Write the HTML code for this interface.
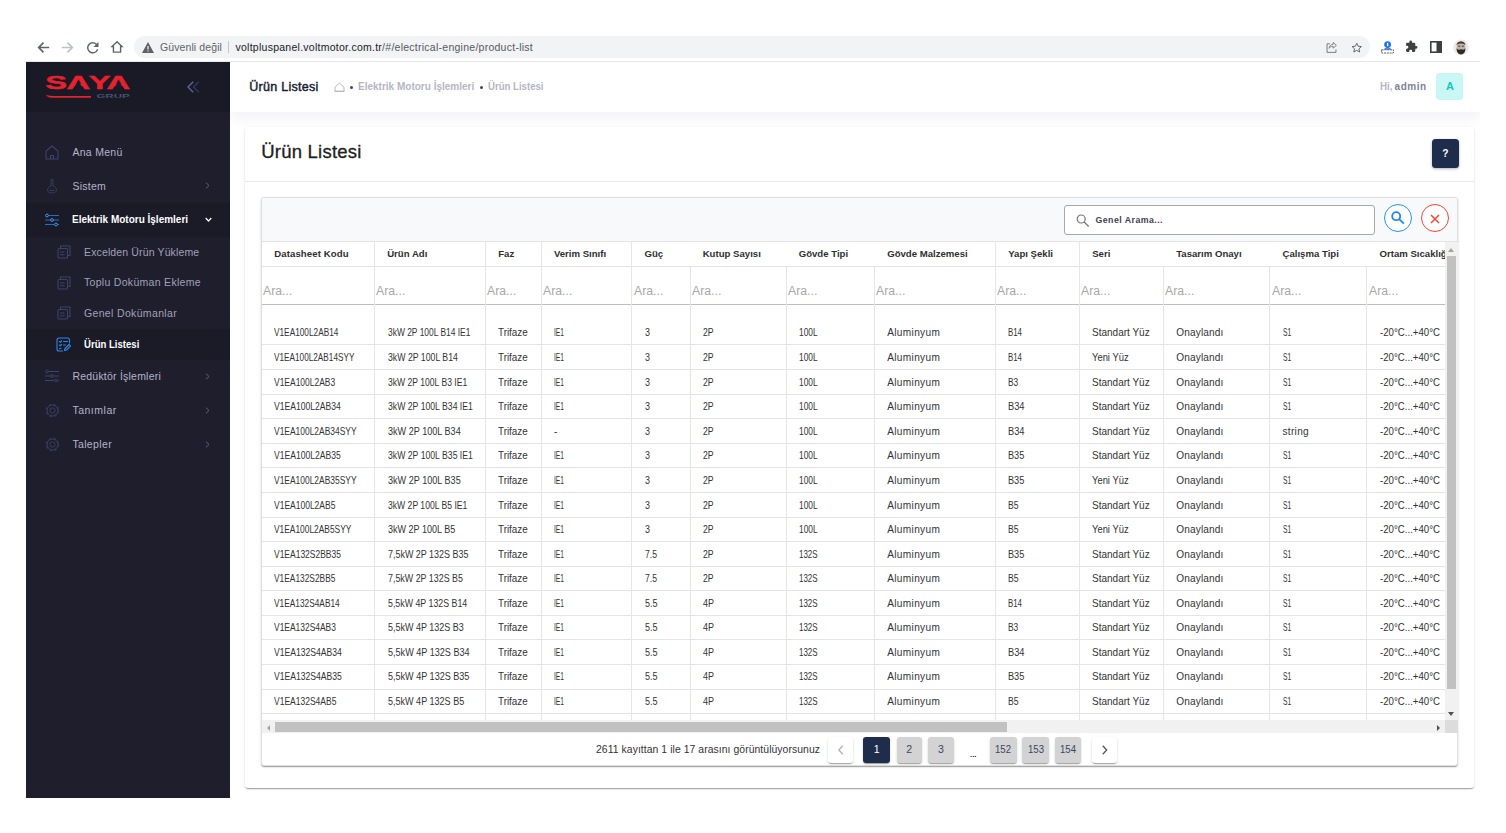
<!DOCTYPE html>
<html lang="tr"><head><meta charset="utf-8"><title>Ürün Listesi</title>
<style>
html,body{margin:0;padding:0;background:#fff;}
body{width:1506px;height:833px;overflow:hidden;position:relative;font-family:"Liberation Sans",sans-serif;}
.t{position:absolute;white-space:pre;}
.abs{position:absolute;}
svg{position:absolute;overflow:visible;}
#aside{position:absolute;left:26px;top:62px;width:204px;height:736px;background:#1e1e2d;}
#brand{position:absolute;left:0;top:0;width:204px;height:50px;background:#1a1a27;}
.mact{position:absolute;left:0;width:204px;background:#1b1b28;}
#hdrw{position:absolute;left:230px;top:62px;width:1250px;height:80px;overflow:hidden;}#hdr{position:absolute;left:0;top:0;width:1250px;height:49.700px;background:#fff;box-shadow:0 6px 12px rgba(82,63,105,.07);}
#card{position:absolute;left:245px;top:126.800px;width:1229px;height:661px;background:#fff;border-radius:3px;box-shadow:0 2px 1px -1px rgba(0,0,0,.2),0 1px 1px 0 rgba(0,0,0,.14),0 1px 3px 0 rgba(0,0,0,.12);}
#tbl{position:absolute;left:261.3px;top:197px;width:1197px;height:568.800px;background:#fff;border:1px solid #dedede;box-sizing:border-box;border-radius:3px;box-shadow:0 2px 1px -1px rgba(0,0,0,.2),0 1px 1px 0 rgba(0,0,0,.14),0 1px 3px 0 rgba(0,0,0,.12);overflow:hidden;}
.hl{position:absolute;height:1px;background:#e3e3e3;}
.vl{position:absolute;width:1px;background:#e6e6e6;}
</style></head><body>
<div class="abs" style="left:26px;top:61px;width:1454px;height:1px;background:#e4e6e8;"></div>
<div class="abs" style="left:134px;top:36px;width:1236px;height:22px;border-radius:11px;background:#f1f3f4;"></div>
<svg style="left:37px;top:41px" width="13" height="13" viewBox="0 0 16 16"><path d="M15 7H4.4l4.3-4.3L7.3 1.300 .6 8l6.700 6.700 1.400-1.400L4.400 9H15z" fill="#5f6368"/></svg>
<svg style="left:61px;top:41px" width="13" height="13" viewBox="0 0 16 16"><path d="M1 7h10.600L7.300 2.700l1.400-1.400L15.400 8l-6.700 6.700-1.400-1.400L11.600 9H1z" fill="#bdc1c6"/></svg>
<svg style="left:87px;top:41.500px" width="11.500" height="11.500" viewBox="0 0 16 16"><path d="M13.650 2.350A7.958 7.958 0 0 0 8 0a8 8 0 1 0 7.730 10h-2.080A5.990 5.990 0 0 1 8 14 6 6 0 1 1 8 2c1.660 0 3.140.690 4.220 1.780L9 7h7V0l-2.350 2.350z" fill="#5f6368"/></svg>
<svg style="left:110px;top:40px" width="14" height="14" viewBox="0 0 16 16"><path d="M8 2L2.300 7.400H3.900V13.900H12.100V7.400H13.700z" fill="none" stroke="#5f6368" stroke-width="1.600" stroke-linejoin="miter"/></svg>
<svg style="left:141.500px;top:41.500px" width="12" height="11" viewBox="0 0 12 11"><path d="M6 0L0 11h12L6 0zm-.6 4h1.200v3.500H5.400V4zm0 4.400h1.200v1.200H5.400V8.400z" fill="#5f6368"/></svg>
<div class="t" style="left:160.00px;top:39.80px;font-size:10.5px;line-height:15px;font-weight:400;color:#5f6368;letter-spacing:0.100px;">Güvenli değil</div>
<div class="abs" style="left:228px;top:41px;width:1px;height:12px;background:#c4c7c9;"></div>
<div class="t" style="left:235.5px;top:39.800px;font-size:10.500px;line-height:15px;letter-spacing:0.257px;color:#202124;">voltpluspanel.voltmotor.com.tr<span style="color:#55595e">/#/electrical-engine/product-list</span></div>
<svg style="left:1325px;top:40.500px" width="13" height="13" viewBox="0 0 16 16" fill="none" stroke="#74797e" stroke-width="1.200"><path d="M6 3.500H2.500v10.500h11V10.500"/><path d="M10 1.800l4 3.500-4 3.500V6.500c-2.500 0-4 .8-5 2.500.3-2.800 2-4.800 5-5z" stroke-width="1.100"/></svg>
<svg style="left:1350.800px;top:41.500px" width="11.500" height="11.500" viewBox="0 0 24 24"><path d="M12 2.500l2.900 6.300 6.900.7-5.200 4.600 1.500 6.800L12 17.400l-6.100 3.500 1.500-6.800L2.200 9.500l6.900-.7L12 2.500z" fill="none" stroke="#5f6368" stroke-width="2" stroke-linejoin="round"/></svg>
<svg style="left:1380.700px;top:40.500px" width="13" height="12.500" viewBox="0 0 13 12.500"><circle cx="6.600" cy="3.600" r="3.400" fill="#1a73e8"/><rect x="5.900" y="1.800" width="1.400" height="3.400" fill="#fff"/><path d="M3.500 7.200h6.200v1.500H3.500z" fill="#1a73e8"/><rect x="0.600" y="8.800" width="11.800" height="3.200" fill="none" stroke="#5f6368" stroke-width="1" stroke-dasharray="2 .8"/></svg>
<svg style="left:1404.500px;top:40px" width="13" height="13" viewBox="0 0 24 24"><path d="M20.500 11H19V7a2 2 0 0 0-2-2h-4V3.500a2.500 2.500 0 0 0-5 0V5H4a2 2 0 0 0-2 2v3.800h1.500a2.700 2.700 0 0 1 0 5.400H2V20a2 2 0 0 0 2 2h3.800v-1.500a2.700 2.700 0 0 1 5.400 0V22H17a2 2 0 0 0 2-2v-4h1.500a2.500 2.500 0 0 0 0-5z" fill="#3c4043"/></svg>
<svg style="left:1430px;top:41px" width="12" height="12" viewBox="0 0 12 12"><rect x="0.800" y="0.800" width="10.400" height="10.400" fill="none" stroke="#3c4043" stroke-width="1.600"/><rect x="6.500" y="1" width="4.500" height="10" fill="#3c4043"/></svg>
<svg style="left:1453px;top:39px" width="16" height="16.500" viewBox="0 0 16 16.500"><circle cx="8" cy="8.200" r="7.800" fill="#eceae8"/><ellipse cx="8" cy="7.800" rx="4.300" ry="5.600" fill="#bfb3a8"/><path d="M3.600 6.500c-.3-5.500 9.100-5.500 8.800 0-.8-2.600-8-2.600-8.800 0z" fill="#3a3632"/><path d="M3.700 8.500c.2 1.500 1 2 2 2.300 1.400-.9 3.200-.9 4.600 0 1-.3 1.800-.8 2-2.300.5 4-1.300 7-4.300 7s-4.800-3-4.300-7z" fill="#2e2b29"/><path d="M5.200 7.200h2M8.800 7.200h2" stroke="#2e2b29" stroke-width=".9"/></svg>
<div id="aside"><div id="brand"></div>
<div class="mact" style="top:141px;height:34px;"></div>
<div class="mact" style="top:267px;height:31px;"></div>
</div>
<svg style="left:44.800px;top:71.600px" width="90" height="28" viewBox="0 0 90 28">
<g transform="translate(0.3,17.3) scale(1.72,1)"><text x="0 12.400 25.200 35.600" y="0" font-family="Liberation Sans, sans-serif" font-weight="700" font-size="19" fill="#e5222d" stroke="#e5222d" stroke-width=".4">SAYA</text></g>
<path d="M33.200 9.100L39.100 18H27.300zM73.700 9.100L79.600 18H67.800z" fill="#1a1a27"/>
<path d="M0.800 22.500c1.400 2.300 3 3.200 5.600 3.200H46v-1.800H7.400c-2.600 0-4.800-.4-6.600-1.400z" fill="#e5222d"/>
<text x="51.400" y="26.400" font-family="Liberation Sans, sans-serif" font-weight="700" font-size="5.800" textLength="33.400" lengthAdjust="spacingAndGlyphs" fill="#465069">GRUP</text>
</svg>
<svg style="left:187px;top:81px" width="13" height="12" viewBox="0 0 13 12" fill="none" stroke-width="1.400"><path d="M6.200 .8L1 6l5.200 5.200" stroke="#5d6199"/><path d="M11.800 .8L6.600 6l5.200 5.200" stroke="#34365a"/></svg>
<svg style="left:45px;top:144.5px" width="14" height="15" viewBox="0 0 14 15" fill="none" stroke="#40426b" stroke-width="1.100" stroke-linejoin="round"><path d="M1 6.200L7 1l6 5.200V14H1z"/><path d="M5.500 14v-3.500h3V14"/></svg>
<div class="t" style="left:72.40px;top:144.50px;font-size:10.5px;line-height:15px;font-weight:400;color:#b4b5c9;letter-spacing:0.291px;">Ana Menü</div>
<svg style="left:45px;top:177.5px" width="14" height="16" viewBox="0 0 14 16" fill="none" stroke="#383a5e" stroke-width="1"><path d="M6 1.500h2v6.500c2.200.8 3.500 2.300 3.500 4 0 1.800-2 3-4.500 3s-4.500-1.200-4.500-3c0-1.700 1.300-3.200 3.500-4z"/><path d="M4.500 12.500h5"/></svg>
<div class="t" style="left:72.40px;top:178.60px;font-size:10.5px;line-height:15px;font-weight:400;color:#b4b5c9;letter-spacing:0.251px;">Sistem</div>
<svg style="left:204.8px;top:182.0px" width="5" height="7" viewBox="0 0 5 7" fill="none" stroke="#5c5e81" stroke-width="1"><path d="M1 .7l3 2.800-3 2.800"/></svg>
<svg style="left:45px;top:212.5px" width="14" height="14" viewBox="0 0 14 14" fill="none" stroke="#3699ff" stroke-width="1"><path d="M3.500 2.500H14M0 7h5.500M8.500 7H14M0 11.500h9.500M12.500 11.500H14" stroke="#2a6cbd"/><circle cx="2" cy="2.500" r="1.400"/><circle cx="7" cy="7" r="1.400"/><circle cx="11" cy="11.500" r="1.400"/></svg>
<div class="t" style="left:72.40px;top:213.40px;font-size:10px;line-height:14px;font-weight:700;color:#fff;transform:scaleX(0.9995);transform-origin:0 50%;">Elektrik Motoru İşlemleri</div>
<svg style="left:205.0px;top:217.2px" width="7" height="5" viewBox="0 0 7 5" fill="none" stroke="#fff" stroke-width="1.200"><path d="M.7 1l2.800 3 2.800-3"/></svg>
<svg style="left:56.5px;top:245px" width="14" height="14" viewBox="0 0 14 14" fill="none" stroke="#3f4169" stroke-width="1.100" stroke-linejoin="round"><path d="M3.500 3.500V1H13v9.500h-2.500"/><rect x="1" y="3.500" width="9.500" height="9.500" rx="1"/><path d="M3 7h4.500M3 9.800h4.500"/></svg>
<div class="t" style="left:84.00px;top:244.50px;font-size:10.5px;line-height:15px;font-weight:400;color:#a1a2b8;letter-spacing:0.136px;">Excelden Ürün Yükleme</div>
<svg style="left:56.5px;top:275.6px" width="14" height="14" viewBox="0 0 14 14" fill="none" stroke="#3f4169" stroke-width="1.100" stroke-linejoin="round"><path d="M3.500 3.500V1H13v9.500h-2.500"/><rect x="1" y="3.500" width="9.500" height="9.500" rx="1"/><path d="M3 7h4.500M3 9.800h4.500"/></svg>
<div class="t" style="left:84.00px;top:275.10px;font-size:10.5px;line-height:15px;font-weight:400;color:#a1a2b8;letter-spacing:0.300px;">Toplu Doküman Ekleme</div>
<svg style="left:56.5px;top:306.4px" width="14" height="14" viewBox="0 0 14 14" fill="none" stroke="#3f4169" stroke-width="1.100" stroke-linejoin="round"><path d="M3.500 3.500V1H13v9.500h-2.500"/><rect x="1" y="3.500" width="9.500" height="9.500" rx="1"/><path d="M3 7h4.500M3 9.800h4.500"/></svg>
<div class="t" style="left:84.00px;top:305.90px;font-size:10.5px;line-height:15px;font-weight:400;color:#a1a2b8;letter-spacing:0.341px;">Genel Dokümanlar</div>
<svg style="left:56px;top:336.5px" width="15" height="15" viewBox="0 0 15 15" fill="none" stroke="#2f86e6" stroke-width="1.100" stroke-linejoin="round" stroke-linecap="round"><path d="M13.500 6V3a2 2 0 0 0-2-2H3a2 2 0 0 0-2 2v9a2 2 0 0 0 2 2h3.500"/><path d="M3.500 4.500l.8.800 1.200-1.500M3.500 8l.8.800 1.200-1.500M3.500 11.500h1.500M7.500 4.500h4M7.500 8h2"/><path d="M8.500 13.500l.5-2 4-4 1.500 1.500-4 4z"/></svg>
<div class="t" style="left:84.00px;top:336.50px;font-size:10.5px;line-height:15px;font-weight:700;color:#fff;transform:scaleX(0.9112);transform-origin:0 50%;">Ürün Listesi</div>
<svg style="left:45px;top:369.4px" width="14" height="14" viewBox="0 0 14 14" fill="none" stroke="#3f4168" stroke-width="1"><path d="M3.500 2.500H14M0 7h5.500M8.500 7H14M0 11.500h9.500M12.500 11.500H14" stroke="#3f4168"/><circle cx="2" cy="2.500" r="1.400"/><circle cx="7" cy="7" r="1.400"/><circle cx="11" cy="11.500" r="1.400"/></svg>
<div class="t" style="left:72.40px;top:368.90px;font-size:10.5px;line-height:15px;font-weight:400;color:#b4b5c9;letter-spacing:0.221px;">Redüktör İşlemleri</div>
<svg style="left:204.8px;top:372.9px" width="5" height="7" viewBox="0 0 5 7" fill="none" stroke="#5c5e81" stroke-width="1"><path d="M1 .7l3 2.800-3 2.800"/></svg>
<svg style="left:44.5px;top:402.5px" width="15" height="15" viewBox="0 0 15 15" fill="none" stroke="#3c3e64" stroke-width="1"><circle cx="7.500" cy="7.500" r="5.900" stroke-dasharray="2.600 2.030" stroke-width="2.200" opacity=".55"/><circle cx="7.500" cy="7.500" r="5.500"/><circle cx="7.500" cy="7.500" r="2.600"/></svg>
<div class="t" style="left:72.40px;top:402.50px;font-size:10.5px;line-height:15px;font-weight:400;color:#b4b5c9;letter-spacing:0.517px;">Tanımlar</div>
<svg style="left:204.8px;top:406.5px" width="5" height="7" viewBox="0 0 5 7" fill="none" stroke="#5c5e81" stroke-width="1"><path d="M1 .7l3 2.800-3 2.800"/></svg>
<svg style="left:44.5px;top:436.7px" width="15" height="15" viewBox="0 0 15 15" fill="none" stroke="#3c3e64" stroke-width="1"><circle cx="7.500" cy="7.500" r="5.900" stroke-dasharray="2.600 2.030" stroke-width="2.200" opacity=".55"/><circle cx="7.500" cy="7.500" r="5.500"/><circle cx="7.500" cy="7.500" r="2.600"/></svg>
<div class="t" style="left:72.40px;top:436.70px;font-size:10.5px;line-height:15px;font-weight:400;color:#b4b5c9;letter-spacing:0.352px;">Talepler</div>
<svg style="left:204.8px;top:440.7px" width="5" height="7" viewBox="0 0 5 7" fill="none" stroke="#5c5e81" stroke-width="1"><path d="M1 .7l3 2.800-3 2.800"/></svg>
<div id="hdrw"><div id="hdr"></div></div>
<div class="t" style="left:249.20px;top:77.80px;font-size:12.5px;line-height:18px;font-weight:400;color:#181c32;letter-spacing:0.292px;-webkit-text-stroke:.45px #181c32;">Ürün Listesi</div>
<svg style="left:334px;top:82px" width="11" height="10" viewBox="0 0 11 10" fill="none" stroke="#b5b5c3" stroke-width="1"><path d="M1 9.300V5.200L5.500 1 10 5.200v4.100z"/><path d="M.5 9.300h10" /></svg>
<div class="abs" style="left:350px;top:85.500px;width:3px;height:3px;border-radius:50%;background:#3f4254;"></div>
<div class="t" style="left:358.00px;top:79.80px;font-size:10px;line-height:14px;font-weight:700;color:#b5b5c3;letter-spacing:0.004px;">Elektrik Motoru İşlemleri</div>
<div class="abs" style="left:480px;top:85.500px;width:3px;height:3px;border-radius:50%;background:#3f4254;"></div>
<div class="t" style="left:488.20px;top:79.80px;font-size:10px;line-height:14px;font-weight:700;color:#b5b5c3;transform:scaleX(0.9603);transform-origin:0 50%;">Ürün Listesi</div>
<div class="t" style="left:1380.00px;top:79.70px;font-size:10px;line-height:14px;font-weight:700;color:#b5b5c3;transform:scaleX(0.9780);transform-origin:0 50%;">Hi,</div>
<div class="t" style="left:1394.50px;top:79.70px;font-size:10px;line-height:14px;font-weight:700;color:#7e8299;letter-spacing:0.569px;">admin</div>
<div class="abs" style="left:1436.300px;top:73px;width:27px;height:26.700px;border-radius:3.500px;background:#c9f7f5;"></div>
<div class="t" style="left:1445.90px;top:78.90px;font-size:11px;line-height:15px;font-weight:700;color:#1bc5bd;letter-spacing:0.147px;">A</div>
<div id="card"></div>
<div class="t" style="left:261.20px;top:138.60px;font-size:18.5px;line-height:26px;font-weight:400;color:#212121;letter-spacing:0.234px;-webkit-text-stroke:.3px #212121;">Ürün Listesi</div>
<div class="hl" style="left:245px;top:181.300px;width:1229px;background:#e7e7ea;"></div>
<div class="abs" style="left:1432px;top:139.200px;width:26.800px;height:29.300px;border-radius:3.500px;background:#1f2d4d;box-shadow:0 1px 3px rgba(0,0,0,.3);"></div>
<div class="t" style="left:1442.20px;top:147.40px;font-size:10.2px;line-height:14px;font-weight:700;color:#fff;">?</div>
<div id="tbl">
<div class="abs" style="left:0;top:0;width:1197px;height:44.0px;background:#f8f9fa;"></div>
</div>
<div class="abs" style="left:1064px;top:204.800px;width:308.800px;height:28.400px;border:1px solid #a9a9a9;border-radius:3px;background:#fff;"></div>
<svg style="left:1075.800px;top:213.500px" width="13.400" height="13" viewBox="0 0 13 13" fill="none" stroke="#777" stroke-width="1.200"><circle cx="5" cy="5" r="4"/><path d="M8 8l4.500 4.500"/></svg>
<div class="t" style="left:1095.50px;top:214.00px;font-size:8.8px;line-height:12px;font-weight:700;color:#3f4254;letter-spacing:0.444px;">Genel Arama...</div>
<div class="abs" style="left:1384px;top:204.200px;width:26px;height:26px;border-radius:14px;border:1px solid #2196f3;background:#fff;"></div>
<svg style="left:1390.800px;top:211.400px" width="13.600" height="13.200" viewBox="0 0 13.600 13.200" fill="none" stroke="#1e88e5" stroke-width="1.800"><circle cx="5.200" cy="5.200" r="4"/><path d="M8.200 8.200l4.600 4.400"/></svg>
<div class="abs" style="left:1420.900px;top:204.200px;width:26px;height:26px;border-radius:14px;border:1px solid #f44336;background:#fff;"></div>
<svg style="left:1429.900px;top:213.800px" width="10" height="10" viewBox="0 0 10 10" fill="none" stroke="#f44336" stroke-width="1.500"><path d="M1 1l8 8M9 1l-8 8"/></svg>
<div class="hl" style="left:262px;top:241px;width:1196.5px;"></div>
<div class="hl" style="left:262px;top:266px;width:1183.5px;"></div>
<div class="abs" style="left:262px;top:303.500px;width:1183.5px;height:1.500px;background:#bdbdbd;"></div>
<div class="hl" style="left:262px;top:344.00px;width:1183.5px;"></div>
<div class="hl" style="left:262px;top:369.00px;width:1183.5px;"></div>
<div class="hl" style="left:262px;top:394.00px;width:1183.5px;"></div>
<div class="hl" style="left:262px;top:418.00px;width:1183.5px;"></div>
<div class="hl" style="left:262px;top:443.00px;width:1183.5px;"></div>
<div class="hl" style="left:262px;top:467.00px;width:1183.5px;"></div>
<div class="hl" style="left:262px;top:492.00px;width:1183.5px;"></div>
<div class="hl" style="left:262px;top:517.00px;width:1183.5px;"></div>
<div class="hl" style="left:262px;top:541.00px;width:1183.5px;"></div>
<div class="hl" style="left:262px;top:566.00px;width:1183.5px;"></div>
<div class="hl" style="left:262px;top:590.00px;width:1183.5px;"></div>
<div class="hl" style="left:262px;top:615.00px;width:1183.5px;"></div>
<div class="hl" style="left:262px;top:639.00px;width:1183.5px;"></div>
<div class="hl" style="left:262px;top:664.00px;width:1183.5px;"></div>
<div class="hl" style="left:262px;top:688.50px;width:1183.5px;"></div>
<div class="hl" style="left:262px;top:713.00px;width:1183.5px;"></div>
<div class="vl" style="left:374.0px;top:241.500px;height:478.79999999999995px;"></div>
<div class="vl" style="left:485.0px;top:241.500px;height:478.79999999999995px;"></div>
<div class="vl" style="left:540.7px;top:241.500px;height:478.79999999999995px;"></div>
<div class="vl" style="left:631.3px;top:241.500px;height:478.79999999999995px;"></div>
<div class="vl" style="left:689.5px;top:266.500px;height:453.79999999999995px;"></div>
<div class="vl" style="left:785.5px;top:266.500px;height:453.79999999999995px;"></div>
<div class="vl" style="left:874.0px;top:266.500px;height:453.79999999999995px;"></div>
<div class="vl" style="left:995.0px;top:241.500px;height:478.79999999999995px;"></div>
<div class="vl" style="left:1079.0px;top:241.500px;height:478.79999999999995px;"></div>
<div class="vl" style="left:1163.0px;top:266.500px;height:453.79999999999995px;"></div>
<div class="vl" style="left:1269.3px;top:266.500px;height:453.79999999999995px;"></div>
<div class="vl" style="left:1366.3px;top:266.500px;height:453.79999999999995px;"></div>
<div class="abs" style="left:262px;top:242px;width:1183.5px;height:478.300px;overflow:hidden;">
<div class="t h" style="left:12.20px;top:4.80px;font-size:9.6px;line-height:13px;font-weight:700;color:#2f2f2f;letter-spacing:0.105px;">Datasheet Kodu</div>
<div class="t h" style="left:125.20px;top:4.80px;font-size:9.6px;line-height:13px;font-weight:700;color:#2f2f2f;">Ürün Adı</div>
<div class="t h" style="left:236.20px;top:4.80px;font-size:9.6px;line-height:13px;font-weight:700;color:#2f2f2f;">Faz</div>
<div class="t h" style="left:291.90px;top:4.80px;font-size:9.6px;line-height:13px;font-weight:700;color:#2f2f2f;">Verim Sınıfı</div>
<div class="t h" style="left:382.50px;top:4.80px;font-size:9.6px;line-height:13px;font-weight:700;color:#2f2f2f;">Güç</div>
<div class="t h" style="left:440.70px;top:4.80px;font-size:9.6px;line-height:13px;font-weight:700;color:#2f2f2f;">Kutup Sayısı</div>
<div class="t h" style="left:536.70px;top:4.80px;font-size:9.6px;line-height:13px;font-weight:700;color:#2f2f2f;">Gövde Tipi</div>
<div class="t h" style="left:625.20px;top:4.80px;font-size:9.6px;line-height:13px;font-weight:700;color:#2f2f2f;">Gövde Malzemesi</div>
<div class="t h" style="left:746.20px;top:4.80px;font-size:9.6px;line-height:13px;font-weight:700;color:#2f2f2f;">Yapı Şekli</div>
<div class="t h" style="left:830.20px;top:4.80px;font-size:9.6px;line-height:13px;font-weight:700;color:#2f2f2f;">Seri</div>
<div class="t h" style="left:914.20px;top:4.80px;font-size:9.6px;line-height:13px;font-weight:700;color:#2f2f2f;">Tasarım Onayı</div>
<div class="t h" style="left:1020.50px;top:4.80px;font-size:9.6px;line-height:13px;font-weight:700;color:#2f2f2f;">Çalışma Tipi</div>
<div class="t h" style="left:1117.50px;top:4.80px;font-size:9.6px;line-height:13px;font-weight:700;color:#2f2f2f;">Ortam Sıcaklığı</div>
<div class="t" style="left:1.20px;top:41.20px;font-size:12.3px;line-height:17px;font-weight:400;color:#a8a8a8;transform:scaleX(0.9969);transform-origin:0 50%;">Ara...</div>
<div class="t" style="left:114.20px;top:41.20px;font-size:12.3px;line-height:17px;font-weight:400;color:#a8a8a8;transform:scaleX(0.9969);transform-origin:0 50%;">Ara...</div>
<div class="t" style="left:225.20px;top:41.20px;font-size:12.3px;line-height:17px;font-weight:400;color:#a8a8a8;transform:scaleX(0.9969);transform-origin:0 50%;">Ara...</div>
<div class="t" style="left:280.90px;top:41.20px;font-size:12.3px;line-height:17px;font-weight:400;color:#a8a8a8;transform:scaleX(0.9969);transform-origin:0 50%;">Ara...</div>
<div class="t" style="left:371.50px;top:41.20px;font-size:12.3px;line-height:17px;font-weight:400;color:#a8a8a8;transform:scaleX(0.9969);transform-origin:0 50%;">Ara...</div>
<div class="t" style="left:429.70px;top:41.20px;font-size:12.3px;line-height:17px;font-weight:400;color:#a8a8a8;transform:scaleX(0.9969);transform-origin:0 50%;">Ara...</div>
<div class="t" style="left:525.70px;top:41.20px;font-size:12.3px;line-height:17px;font-weight:400;color:#a8a8a8;transform:scaleX(0.9969);transform-origin:0 50%;">Ara...</div>
<div class="t" style="left:614.20px;top:41.20px;font-size:12.3px;line-height:17px;font-weight:400;color:#a8a8a8;transform:scaleX(0.9969);transform-origin:0 50%;">Ara...</div>
<div class="t" style="left:735.20px;top:41.20px;font-size:12.3px;line-height:17px;font-weight:400;color:#a8a8a8;transform:scaleX(0.9969);transform-origin:0 50%;">Ara...</div>
<div class="t" style="left:819.20px;top:41.20px;font-size:12.3px;line-height:17px;font-weight:400;color:#a8a8a8;transform:scaleX(0.9969);transform-origin:0 50%;">Ara...</div>
<div class="t" style="left:903.20px;top:41.20px;font-size:12.3px;line-height:17px;font-weight:400;color:#a8a8a8;transform:scaleX(0.9969);transform-origin:0 50%;">Ara...</div>
<div class="t" style="left:1009.50px;top:41.20px;font-size:12.3px;line-height:17px;font-weight:400;color:#a8a8a8;transform:scaleX(0.9969);transform-origin:0 50%;">Ara...</div>
<div class="t" style="left:1106.50px;top:41.20px;font-size:12.3px;line-height:17px;font-weight:400;color:#a8a8a8;transform:scaleX(0.9969);transform-origin:0 50%;">Ara...</div>
<div class="t" style="left:12.20px;top:83.80px;font-size:10.1px;line-height:14px;font-weight:400;color:#333;transform:scaleX(0.8196);transform-origin:0 50%;">V1EA100L2AB14</div>
<div class="t" style="left:126.20px;top:83.80px;font-size:10.1px;line-height:14px;font-weight:400;color:#333;transform:scaleX(0.8343);transform-origin:0 50%;">3kW 2P 100L B14 IE1</div>
<div class="t" style="left:236.20px;top:83.80px;font-size:10.1px;line-height:14px;font-weight:400;color:#333;transform:scaleX(0.9743);transform-origin:0 50%;">Trifaze</div>
<div class="t" style="left:291.90px;top:83.80px;font-size:10.1px;line-height:14px;font-weight:400;color:#333;transform:scaleX(0.6598);transform-origin:0 50%;">IE1</div>
<div class="t" style="left:382.50px;top:83.80px;font-size:10.1px;line-height:14px;font-weight:400;color:#333;transform:scaleX(0.8889);transform-origin:0 50%;">3</div>
<div class="t" style="left:440.70px;top:83.80px;font-size:10.1px;line-height:14px;font-weight:400;color:#333;transform:scaleX(0.8576);transform-origin:0 50%;">2P</div>
<div class="t" style="left:536.70px;top:83.80px;font-size:10.1px;line-height:14px;font-weight:400;color:#333;transform:scaleX(0.8278);transform-origin:0 50%;">100L</div>
<div class="t" style="left:625.20px;top:83.80px;font-size:10.1px;line-height:14px;font-weight:400;color:#333;letter-spacing:0.342px;">Aluminyum</div>
<div class="t" style="left:746.20px;top:83.80px;font-size:10.1px;line-height:14px;font-weight:400;color:#333;transform:scaleX(0.7791);transform-origin:0 50%;">B14</div>
<div class="t" style="left:830.20px;top:83.80px;font-size:10.1px;line-height:14px;font-weight:400;color:#333;transform:scaleX(0.9916);transform-origin:0 50%;">Standart Yüz</div>
<div class="t" style="left:914.20px;top:83.80px;font-size:10.1px;line-height:14px;font-weight:400;color:#333;letter-spacing:0.143px;">Onaylandı</div>
<div class="t" style="left:1020.50px;top:83.80px;font-size:10.1px;line-height:14px;font-weight:400;color:#333;transform:scaleX(0.6635);transform-origin:0 50%;">S1</div>
<div class="t" style="left:1117.50px;top:83.80px;font-size:10.1px;line-height:14px;font-weight:400;color:#333;transform:scaleX(0.9557);transform-origin:0 50%;">-20°C...+40°C</div>
<div class="t" style="left:12.20px;top:108.80px;font-size:10.1px;line-height:14px;font-weight:400;color:#333;transform:scaleX(0.8139);transform-origin:0 50%;">V1EA100L2AB14SYY</div>
<div class="t" style="left:126.20px;top:108.80px;font-size:10.1px;line-height:14px;font-weight:400;color:#333;transform:scaleX(0.8650);transform-origin:0 50%;">3kW 2P 100L B14</div>
<div class="t" style="left:236.20px;top:108.80px;font-size:10.1px;line-height:14px;font-weight:400;color:#333;transform:scaleX(0.9743);transform-origin:0 50%;">Trifaze</div>
<div class="t" style="left:291.90px;top:108.80px;font-size:10.1px;line-height:14px;font-weight:400;color:#333;transform:scaleX(0.6598);transform-origin:0 50%;">IE1</div>
<div class="t" style="left:382.50px;top:108.80px;font-size:10.1px;line-height:14px;font-weight:400;color:#333;transform:scaleX(0.8889);transform-origin:0 50%;">3</div>
<div class="t" style="left:440.70px;top:108.80px;font-size:10.1px;line-height:14px;font-weight:400;color:#333;transform:scaleX(0.8576);transform-origin:0 50%;">2P</div>
<div class="t" style="left:536.70px;top:108.80px;font-size:10.1px;line-height:14px;font-weight:400;color:#333;transform:scaleX(0.8278);transform-origin:0 50%;">100L</div>
<div class="t" style="left:625.20px;top:108.80px;font-size:10.1px;line-height:14px;font-weight:400;color:#333;letter-spacing:0.342px;">Aluminyum</div>
<div class="t" style="left:746.20px;top:108.80px;font-size:10.1px;line-height:14px;font-weight:400;color:#333;transform:scaleX(0.7791);transform-origin:0 50%;">B14</div>
<div class="t" style="left:830.20px;top:108.80px;font-size:10.1px;line-height:14px;font-weight:400;color:#333;transform:scaleX(0.9314);transform-origin:0 50%;">Yeni Yüz</div>
<div class="t" style="left:914.20px;top:108.80px;font-size:10.1px;line-height:14px;font-weight:400;color:#333;letter-spacing:0.143px;">Onaylandı</div>
<div class="t" style="left:1020.50px;top:108.80px;font-size:10.1px;line-height:14px;font-weight:400;color:#333;transform:scaleX(0.6635);transform-origin:0 50%;">S1</div>
<div class="t" style="left:1117.50px;top:108.80px;font-size:10.1px;line-height:14px;font-weight:400;color:#333;transform:scaleX(0.9557);transform-origin:0 50%;">-20°C...+40°C</div>
<div class="t" style="left:12.20px;top:133.80px;font-size:10.1px;line-height:14px;font-weight:400;color:#333;transform:scaleX(0.8387);transform-origin:0 50%;">V1EA100L2AB3</div>
<div class="t" style="left:126.20px;top:133.80px;font-size:10.1px;line-height:14px;font-weight:400;color:#333;transform:scaleX(0.8502);transform-origin:0 50%;">3kW 2P 100L B3 IE1</div>
<div class="t" style="left:236.20px;top:133.80px;font-size:10.1px;line-height:14px;font-weight:400;color:#333;transform:scaleX(0.9743);transform-origin:0 50%;">Trifaze</div>
<div class="t" style="left:291.90px;top:133.80px;font-size:10.1px;line-height:14px;font-weight:400;color:#333;transform:scaleX(0.6598);transform-origin:0 50%;">IE1</div>
<div class="t" style="left:382.50px;top:133.80px;font-size:10.1px;line-height:14px;font-weight:400;color:#333;transform:scaleX(0.8889);transform-origin:0 50%;">3</div>
<div class="t" style="left:440.70px;top:133.80px;font-size:10.1px;line-height:14px;font-weight:400;color:#333;transform:scaleX(0.8576);transform-origin:0 50%;">2P</div>
<div class="t" style="left:536.70px;top:133.80px;font-size:10.1px;line-height:14px;font-weight:400;color:#333;transform:scaleX(0.8278);transform-origin:0 50%;">100L</div>
<div class="t" style="left:625.20px;top:133.80px;font-size:10.1px;line-height:14px;font-weight:400;color:#333;letter-spacing:0.342px;">Aluminyum</div>
<div class="t" style="left:746.20px;top:133.80px;font-size:10.1px;line-height:14px;font-weight:400;color:#333;transform:scaleX(0.8334);transform-origin:0 50%;">B3</div>
<div class="t" style="left:830.20px;top:133.80px;font-size:10.1px;line-height:14px;font-weight:400;color:#333;transform:scaleX(0.9916);transform-origin:0 50%;">Standart Yüz</div>
<div class="t" style="left:914.20px;top:133.80px;font-size:10.1px;line-height:14px;font-weight:400;color:#333;letter-spacing:0.143px;">Onaylandı</div>
<div class="t" style="left:1020.50px;top:133.80px;font-size:10.1px;line-height:14px;font-weight:400;color:#333;transform:scaleX(0.6635);transform-origin:0 50%;">S1</div>
<div class="t" style="left:1117.50px;top:133.80px;font-size:10.1px;line-height:14px;font-weight:400;color:#333;transform:scaleX(0.9557);transform-origin:0 50%;">-20°C...+40°C</div>
<div class="t" style="left:12.20px;top:157.80px;font-size:10.1px;line-height:14px;font-weight:400;color:#333;transform:scaleX(0.8488);transform-origin:0 50%;">V1EA100L2AB34</div>
<div class="t" style="left:126.20px;top:157.80px;font-size:10.1px;line-height:14px;font-weight:400;color:#333;transform:scaleX(0.8596);transform-origin:0 50%;">3kW 2P 100L B34 IE1</div>
<div class="t" style="left:236.20px;top:157.80px;font-size:10.1px;line-height:14px;font-weight:400;color:#333;transform:scaleX(0.9743);transform-origin:0 50%;">Trifaze</div>
<div class="t" style="left:291.90px;top:157.80px;font-size:10.1px;line-height:14px;font-weight:400;color:#333;transform:scaleX(0.6598);transform-origin:0 50%;">IE1</div>
<div class="t" style="left:382.50px;top:157.80px;font-size:10.1px;line-height:14px;font-weight:400;color:#333;transform:scaleX(0.8889);transform-origin:0 50%;">3</div>
<div class="t" style="left:440.70px;top:157.80px;font-size:10.1px;line-height:14px;font-weight:400;color:#333;transform:scaleX(0.8576);transform-origin:0 50%;">2P</div>
<div class="t" style="left:536.70px;top:157.80px;font-size:10.1px;line-height:14px;font-weight:400;color:#333;transform:scaleX(0.8278);transform-origin:0 50%;">100L</div>
<div class="t" style="left:625.20px;top:157.80px;font-size:10.1px;line-height:14px;font-weight:400;color:#333;letter-spacing:0.342px;">Aluminyum</div>
<div class="t" style="left:746.20px;top:157.80px;font-size:10.1px;line-height:14px;font-weight:400;color:#333;transform:scaleX(0.9183);transform-origin:0 50%;">B34</div>
<div class="t" style="left:830.20px;top:157.80px;font-size:10.1px;line-height:14px;font-weight:400;color:#333;transform:scaleX(0.9916);transform-origin:0 50%;">Standart Yüz</div>
<div class="t" style="left:914.20px;top:157.80px;font-size:10.1px;line-height:14px;font-weight:400;color:#333;letter-spacing:0.143px;">Onaylandı</div>
<div class="t" style="left:1020.50px;top:157.80px;font-size:10.1px;line-height:14px;font-weight:400;color:#333;transform:scaleX(0.6635);transform-origin:0 50%;">S1</div>
<div class="t" style="left:1117.50px;top:157.80px;font-size:10.1px;line-height:14px;font-weight:400;color:#333;transform:scaleX(0.9557);transform-origin:0 50%;">-20°C...+40°C</div>
<div class="t" style="left:12.20px;top:182.80px;font-size:10.1px;line-height:14px;font-weight:400;color:#333;transform:scaleX(0.8362);transform-origin:0 50%;">V1EA100L2AB34SYY</div>
<div class="t" style="left:126.20px;top:182.80px;font-size:10.1px;line-height:14px;font-weight:400;color:#333;transform:scaleX(0.8996);transform-origin:0 50%;">3kW 2P 100L B34</div>
<div class="t" style="left:236.20px;top:182.80px;font-size:10.1px;line-height:14px;font-weight:400;color:#333;transform:scaleX(0.9743);transform-origin:0 50%;">Trifaze</div>
<div class="t" style="left:291.90px;top:182.80px;font-size:10.1px;line-height:14px;font-weight:400;color:#333;">-</div>
<div class="t" style="left:382.50px;top:182.80px;font-size:10.1px;line-height:14px;font-weight:400;color:#333;transform:scaleX(0.8889);transform-origin:0 50%;">3</div>
<div class="t" style="left:440.70px;top:182.80px;font-size:10.1px;line-height:14px;font-weight:400;color:#333;transform:scaleX(0.8576);transform-origin:0 50%;">2P</div>
<div class="t" style="left:536.70px;top:182.80px;font-size:10.1px;line-height:14px;font-weight:400;color:#333;transform:scaleX(0.8278);transform-origin:0 50%;">100L</div>
<div class="t" style="left:625.20px;top:182.80px;font-size:10.1px;line-height:14px;font-weight:400;color:#333;letter-spacing:0.342px;">Aluminyum</div>
<div class="t" style="left:746.20px;top:182.80px;font-size:10.1px;line-height:14px;font-weight:400;color:#333;transform:scaleX(0.9183);transform-origin:0 50%;">B34</div>
<div class="t" style="left:830.20px;top:182.80px;font-size:10.1px;line-height:14px;font-weight:400;color:#333;transform:scaleX(0.9916);transform-origin:0 50%;">Standart Yüz</div>
<div class="t" style="left:914.20px;top:182.80px;font-size:10.1px;line-height:14px;font-weight:400;color:#333;letter-spacing:0.143px;">Onaylandı</div>
<div class="t" style="left:1020.50px;top:182.80px;font-size:10.1px;line-height:14px;font-weight:400;color:#333;letter-spacing:0.302px;">string</div>
<div class="t" style="left:1117.50px;top:182.80px;font-size:10.1px;line-height:14px;font-weight:400;color:#333;transform:scaleX(0.9557);transform-origin:0 50%;">-20°C...+40°C</div>
<div class="t" style="left:12.20px;top:206.80px;font-size:10.1px;line-height:14px;font-weight:400;color:#333;transform:scaleX(0.8514);transform-origin:0 50%;">V1EA100L2AB35</div>
<div class="t" style="left:126.20px;top:206.80px;font-size:10.1px;line-height:14px;font-weight:400;color:#333;transform:scaleX(0.8596);transform-origin:0 50%;">3kW 2P 100L B35 IE1</div>
<div class="t" style="left:236.20px;top:206.80px;font-size:10.1px;line-height:14px;font-weight:400;color:#333;transform:scaleX(0.9743);transform-origin:0 50%;">Trifaze</div>
<div class="t" style="left:291.90px;top:206.80px;font-size:10.1px;line-height:14px;font-weight:400;color:#333;transform:scaleX(0.6598);transform-origin:0 50%;">IE1</div>
<div class="t" style="left:382.50px;top:206.80px;font-size:10.1px;line-height:14px;font-weight:400;color:#333;transform:scaleX(0.8889);transform-origin:0 50%;">3</div>
<div class="t" style="left:440.70px;top:206.80px;font-size:10.1px;line-height:14px;font-weight:400;color:#333;transform:scaleX(0.8576);transform-origin:0 50%;">2P</div>
<div class="t" style="left:536.70px;top:206.80px;font-size:10.1px;line-height:14px;font-weight:400;color:#333;transform:scaleX(0.8278);transform-origin:0 50%;">100L</div>
<div class="t" style="left:625.20px;top:206.80px;font-size:10.1px;line-height:14px;font-weight:400;color:#333;letter-spacing:0.342px;">Aluminyum</div>
<div class="t" style="left:746.20px;top:206.80px;font-size:10.1px;line-height:14px;font-weight:400;color:#333;transform:scaleX(0.9071);transform-origin:0 50%;">B35</div>
<div class="t" style="left:830.20px;top:206.80px;font-size:10.1px;line-height:14px;font-weight:400;color:#333;transform:scaleX(0.9916);transform-origin:0 50%;">Standart Yüz</div>
<div class="t" style="left:914.20px;top:206.80px;font-size:10.1px;line-height:14px;font-weight:400;color:#333;letter-spacing:0.143px;">Onaylandı</div>
<div class="t" style="left:1020.50px;top:206.80px;font-size:10.1px;line-height:14px;font-weight:400;color:#333;transform:scaleX(0.6635);transform-origin:0 50%;">S1</div>
<div class="t" style="left:1117.50px;top:206.80px;font-size:10.1px;line-height:14px;font-weight:400;color:#333;transform:scaleX(0.9557);transform-origin:0 50%;">-20°C...+40°C</div>
<div class="t" style="left:12.20px;top:231.80px;font-size:10.1px;line-height:14px;font-weight:400;color:#333;transform:scaleX(0.8362);transform-origin:0 50%;">V1EA100L2AB35SYY</div>
<div class="t" style="left:126.20px;top:231.80px;font-size:10.1px;line-height:14px;font-weight:400;color:#333;transform:scaleX(0.8996);transform-origin:0 50%;">3kW 2P 100L B35</div>
<div class="t" style="left:236.20px;top:231.80px;font-size:10.1px;line-height:14px;font-weight:400;color:#333;transform:scaleX(0.9743);transform-origin:0 50%;">Trifaze</div>
<div class="t" style="left:291.90px;top:231.80px;font-size:10.1px;line-height:14px;font-weight:400;color:#333;transform:scaleX(0.6598);transform-origin:0 50%;">IE1</div>
<div class="t" style="left:382.50px;top:231.80px;font-size:10.1px;line-height:14px;font-weight:400;color:#333;transform:scaleX(0.8889);transform-origin:0 50%;">3</div>
<div class="t" style="left:440.70px;top:231.80px;font-size:10.1px;line-height:14px;font-weight:400;color:#333;transform:scaleX(0.8576);transform-origin:0 50%;">2P</div>
<div class="t" style="left:536.70px;top:231.80px;font-size:10.1px;line-height:14px;font-weight:400;color:#333;transform:scaleX(0.8278);transform-origin:0 50%;">100L</div>
<div class="t" style="left:625.20px;top:231.80px;font-size:10.1px;line-height:14px;font-weight:400;color:#333;letter-spacing:0.342px;">Aluminyum</div>
<div class="t" style="left:746.20px;top:231.80px;font-size:10.1px;line-height:14px;font-weight:400;color:#333;transform:scaleX(0.9071);transform-origin:0 50%;">B35</div>
<div class="t" style="left:830.20px;top:231.80px;font-size:10.1px;line-height:14px;font-weight:400;color:#333;transform:scaleX(0.9314);transform-origin:0 50%;">Yeni Yüz</div>
<div class="t" style="left:914.20px;top:231.80px;font-size:10.1px;line-height:14px;font-weight:400;color:#333;letter-spacing:0.143px;">Onaylandı</div>
<div class="t" style="left:1020.50px;top:231.80px;font-size:10.1px;line-height:14px;font-weight:400;color:#333;transform:scaleX(0.6635);transform-origin:0 50%;">S1</div>
<div class="t" style="left:1117.50px;top:231.80px;font-size:10.1px;line-height:14px;font-weight:400;color:#333;transform:scaleX(0.9557);transform-origin:0 50%;">-20°C...+40°C</div>
<div class="t" style="left:12.20px;top:256.80px;font-size:10.1px;line-height:14px;font-weight:400;color:#333;transform:scaleX(0.8415);transform-origin:0 50%;">V1EA100L2AB5</div>
<div class="t" style="left:126.20px;top:256.80px;font-size:10.1px;line-height:14px;font-weight:400;color:#333;transform:scaleX(0.8523);transform-origin:0 50%;">3kW 2P 100L B5 IE1</div>
<div class="t" style="left:236.20px;top:256.80px;font-size:10.1px;line-height:14px;font-weight:400;color:#333;transform:scaleX(0.9743);transform-origin:0 50%;">Trifaze</div>
<div class="t" style="left:291.90px;top:256.80px;font-size:10.1px;line-height:14px;font-weight:400;color:#333;transform:scaleX(0.6598);transform-origin:0 50%;">IE1</div>
<div class="t" style="left:382.50px;top:256.80px;font-size:10.1px;line-height:14px;font-weight:400;color:#333;transform:scaleX(0.8889);transform-origin:0 50%;">3</div>
<div class="t" style="left:440.70px;top:256.80px;font-size:10.1px;line-height:14px;font-weight:400;color:#333;transform:scaleX(0.8576);transform-origin:0 50%;">2P</div>
<div class="t" style="left:536.70px;top:256.80px;font-size:10.1px;line-height:14px;font-weight:400;color:#333;transform:scaleX(0.8278);transform-origin:0 50%;">100L</div>
<div class="t" style="left:625.20px;top:256.80px;font-size:10.1px;line-height:14px;font-weight:400;color:#333;letter-spacing:0.342px;">Aluminyum</div>
<div class="t" style="left:746.20px;top:256.80px;font-size:10.1px;line-height:14px;font-weight:400;color:#333;transform:scaleX(0.8576);transform-origin:0 50%;">B5</div>
<div class="t" style="left:830.20px;top:256.80px;font-size:10.1px;line-height:14px;font-weight:400;color:#333;transform:scaleX(0.9916);transform-origin:0 50%;">Standart Yüz</div>
<div class="t" style="left:914.20px;top:256.80px;font-size:10.1px;line-height:14px;font-weight:400;color:#333;letter-spacing:0.143px;">Onaylandı</div>
<div class="t" style="left:1020.50px;top:256.80px;font-size:10.1px;line-height:14px;font-weight:400;color:#333;transform:scaleX(0.6635);transform-origin:0 50%;">S1</div>
<div class="t" style="left:1117.50px;top:256.80px;font-size:10.1px;line-height:14px;font-weight:400;color:#333;transform:scaleX(0.9557);transform-origin:0 50%;">-20°C...+40°C</div>
<div class="t" style="left:12.20px;top:280.80px;font-size:10.1px;line-height:14px;font-weight:400;color:#333;transform:scaleX(0.8309);transform-origin:0 50%;">V1EA100L2AB5SYY</div>
<div class="t" style="left:126.20px;top:280.80px;font-size:10.1px;line-height:14px;font-weight:400;color:#333;transform:scaleX(0.8936);transform-origin:0 50%;">3kW 2P 100L B5</div>
<div class="t" style="left:236.20px;top:280.80px;font-size:10.1px;line-height:14px;font-weight:400;color:#333;transform:scaleX(0.9743);transform-origin:0 50%;">Trifaze</div>
<div class="t" style="left:291.90px;top:280.80px;font-size:10.1px;line-height:14px;font-weight:400;color:#333;transform:scaleX(0.6598);transform-origin:0 50%;">IE1</div>
<div class="t" style="left:382.50px;top:280.80px;font-size:10.1px;line-height:14px;font-weight:400;color:#333;transform:scaleX(0.8889);transform-origin:0 50%;">3</div>
<div class="t" style="left:440.70px;top:280.80px;font-size:10.1px;line-height:14px;font-weight:400;color:#333;transform:scaleX(0.8576);transform-origin:0 50%;">2P</div>
<div class="t" style="left:536.70px;top:280.80px;font-size:10.1px;line-height:14px;font-weight:400;color:#333;transform:scaleX(0.8278);transform-origin:0 50%;">100L</div>
<div class="t" style="left:625.20px;top:280.80px;font-size:10.1px;line-height:14px;font-weight:400;color:#333;letter-spacing:0.342px;">Aluminyum</div>
<div class="t" style="left:746.20px;top:280.80px;font-size:10.1px;line-height:14px;font-weight:400;color:#333;transform:scaleX(0.8576);transform-origin:0 50%;">B5</div>
<div class="t" style="left:830.20px;top:280.80px;font-size:10.1px;line-height:14px;font-weight:400;color:#333;transform:scaleX(0.9314);transform-origin:0 50%;">Yeni Yüz</div>
<div class="t" style="left:914.20px;top:280.80px;font-size:10.1px;line-height:14px;font-weight:400;color:#333;letter-spacing:0.143px;">Onaylandı</div>
<div class="t" style="left:1020.50px;top:280.80px;font-size:10.1px;line-height:14px;font-weight:400;color:#333;transform:scaleX(0.6635);transform-origin:0 50%;">S1</div>
<div class="t" style="left:1117.50px;top:280.80px;font-size:10.1px;line-height:14px;font-weight:400;color:#333;transform:scaleX(0.9557);transform-origin:0 50%;">-20°C...+40°C</div>
<div class="t" style="left:12.20px;top:305.80px;font-size:10.1px;line-height:14px;font-weight:400;color:#333;transform:scaleX(0.8394);transform-origin:0 50%;">V1EA132S2BB35</div>
<div class="t" style="left:126.20px;top:305.80px;font-size:10.1px;line-height:14px;font-weight:400;color:#333;transform:scaleX(0.8863);transform-origin:0 50%;">7,5kW 2P 132S B35</div>
<div class="t" style="left:236.20px;top:305.80px;font-size:10.1px;line-height:14px;font-weight:400;color:#333;transform:scaleX(0.9743);transform-origin:0 50%;">Trifaze</div>
<div class="t" style="left:291.90px;top:305.80px;font-size:10.1px;line-height:14px;font-weight:400;color:#333;transform:scaleX(0.6598);transform-origin:0 50%;">IE1</div>
<div class="t" style="left:382.50px;top:305.80px;font-size:10.1px;line-height:14px;font-weight:400;color:#333;transform:scaleX(0.8543);transform-origin:0 50%;">7.5</div>
<div class="t" style="left:440.70px;top:305.80px;font-size:10.1px;line-height:14px;font-weight:400;color:#333;transform:scaleX(0.8576);transform-origin:0 50%;">2P</div>
<div class="t" style="left:536.70px;top:305.80px;font-size:10.1px;line-height:14px;font-weight:400;color:#333;transform:scaleX(0.7889);transform-origin:0 50%;">132S</div>
<div class="t" style="left:625.20px;top:305.80px;font-size:10.1px;line-height:14px;font-weight:400;color:#333;letter-spacing:0.342px;">Aluminyum</div>
<div class="t" style="left:746.20px;top:305.80px;font-size:10.1px;line-height:14px;font-weight:400;color:#333;transform:scaleX(0.9071);transform-origin:0 50%;">B35</div>
<div class="t" style="left:830.20px;top:305.80px;font-size:10.1px;line-height:14px;font-weight:400;color:#333;transform:scaleX(0.9916);transform-origin:0 50%;">Standart Yüz</div>
<div class="t" style="left:914.20px;top:305.80px;font-size:10.1px;line-height:14px;font-weight:400;color:#333;letter-spacing:0.143px;">Onaylandı</div>
<div class="t" style="left:1020.50px;top:305.80px;font-size:10.1px;line-height:14px;font-weight:400;color:#333;transform:scaleX(0.6635);transform-origin:0 50%;">S1</div>
<div class="t" style="left:1117.50px;top:305.80px;font-size:10.1px;line-height:14px;font-weight:400;color:#333;transform:scaleX(0.9557);transform-origin:0 50%;">-20°C...+40°C</div>
<div class="t" style="left:12.20px;top:329.80px;font-size:10.1px;line-height:14px;font-weight:400;color:#333;transform:scaleX(0.8289);transform-origin:0 50%;">V1EA132S2BB5</div>
<div class="t" style="left:126.20px;top:329.80px;font-size:10.1px;line-height:14px;font-weight:400;color:#333;transform:scaleX(0.8800);transform-origin:0 50%;">7,5kW 2P 132S B5</div>
<div class="t" style="left:236.20px;top:329.80px;font-size:10.1px;line-height:14px;font-weight:400;color:#333;transform:scaleX(0.9743);transform-origin:0 50%;">Trifaze</div>
<div class="t" style="left:291.90px;top:329.80px;font-size:10.1px;line-height:14px;font-weight:400;color:#333;transform:scaleX(0.6598);transform-origin:0 50%;">IE1</div>
<div class="t" style="left:382.50px;top:329.80px;font-size:10.1px;line-height:14px;font-weight:400;color:#333;transform:scaleX(0.8543);transform-origin:0 50%;">7.5</div>
<div class="t" style="left:440.70px;top:329.80px;font-size:10.1px;line-height:14px;font-weight:400;color:#333;transform:scaleX(0.8576);transform-origin:0 50%;">2P</div>
<div class="t" style="left:536.70px;top:329.80px;font-size:10.1px;line-height:14px;font-weight:400;color:#333;transform:scaleX(0.7889);transform-origin:0 50%;">132S</div>
<div class="t" style="left:625.20px;top:329.80px;font-size:10.1px;line-height:14px;font-weight:400;color:#333;letter-spacing:0.342px;">Aluminyum</div>
<div class="t" style="left:746.20px;top:329.80px;font-size:10.1px;line-height:14px;font-weight:400;color:#333;transform:scaleX(0.8576);transform-origin:0 50%;">B5</div>
<div class="t" style="left:830.20px;top:329.80px;font-size:10.1px;line-height:14px;font-weight:400;color:#333;transform:scaleX(0.9916);transform-origin:0 50%;">Standart Yüz</div>
<div class="t" style="left:914.20px;top:329.80px;font-size:10.1px;line-height:14px;font-weight:400;color:#333;letter-spacing:0.143px;">Onaylandı</div>
<div class="t" style="left:1020.50px;top:329.80px;font-size:10.1px;line-height:14px;font-weight:400;color:#333;transform:scaleX(0.6635);transform-origin:0 50%;">S1</div>
<div class="t" style="left:1117.50px;top:329.80px;font-size:10.1px;line-height:14px;font-weight:400;color:#333;transform:scaleX(0.9557);transform-origin:0 50%;">-20°C...+40°C</div>
<div class="t" style="left:12.20px;top:354.80px;font-size:10.1px;line-height:14px;font-weight:400;color:#333;transform:scaleX(0.8243);transform-origin:0 50%;">V1EA132S4AB14</div>
<div class="t" style="left:126.20px;top:354.80px;font-size:10.1px;line-height:14px;font-weight:400;color:#333;transform:scaleX(0.8730);transform-origin:0 50%;">5,5kW 4P 132S B14</div>
<div class="t" style="left:236.20px;top:354.80px;font-size:10.1px;line-height:14px;font-weight:400;color:#333;transform:scaleX(0.9743);transform-origin:0 50%;">Trifaze</div>
<div class="t" style="left:291.90px;top:354.80px;font-size:10.1px;line-height:14px;font-weight:400;color:#333;transform:scaleX(0.6598);transform-origin:0 50%;">IE1</div>
<div class="t" style="left:382.50px;top:354.80px;font-size:10.1px;line-height:14px;font-weight:400;color:#333;transform:scaleX(0.8970);transform-origin:0 50%;">5.5</div>
<div class="t" style="left:440.70px;top:354.80px;font-size:10.1px;line-height:14px;font-weight:400;color:#333;transform:scaleX(0.8900);transform-origin:0 50%;">4P</div>
<div class="t" style="left:536.70px;top:354.80px;font-size:10.1px;line-height:14px;font-weight:400;color:#333;transform:scaleX(0.7889);transform-origin:0 50%;">132S</div>
<div class="t" style="left:625.20px;top:354.80px;font-size:10.1px;line-height:14px;font-weight:400;color:#333;letter-spacing:0.342px;">Aluminyum</div>
<div class="t" style="left:746.20px;top:354.80px;font-size:10.1px;line-height:14px;font-weight:400;color:#333;transform:scaleX(0.7791);transform-origin:0 50%;">B14</div>
<div class="t" style="left:830.20px;top:354.80px;font-size:10.1px;line-height:14px;font-weight:400;color:#333;transform:scaleX(0.9916);transform-origin:0 50%;">Standart Yüz</div>
<div class="t" style="left:914.20px;top:354.80px;font-size:10.1px;line-height:14px;font-weight:400;color:#333;letter-spacing:0.143px;">Onaylandı</div>
<div class="t" style="left:1020.50px;top:354.80px;font-size:10.1px;line-height:14px;font-weight:400;color:#333;transform:scaleX(0.6635);transform-origin:0 50%;">S1</div>
<div class="t" style="left:1117.50px;top:354.80px;font-size:10.1px;line-height:14px;font-weight:400;color:#333;transform:scaleX(0.9557);transform-origin:0 50%;">-20°C...+40°C</div>
<div class="t" style="left:12.20px;top:378.80px;font-size:10.1px;line-height:14px;font-weight:400;color:#333;transform:scaleX(0.8356);transform-origin:0 50%;">V1EA132S4AB3</div>
<div class="t" style="left:126.20px;top:378.80px;font-size:10.1px;line-height:14px;font-weight:400;color:#333;transform:scaleX(0.8894);transform-origin:0 50%;">5,5kW 4P 132S B3</div>
<div class="t" style="left:236.20px;top:378.80px;font-size:10.1px;line-height:14px;font-weight:400;color:#333;transform:scaleX(0.9743);transform-origin:0 50%;">Trifaze</div>
<div class="t" style="left:291.90px;top:378.80px;font-size:10.1px;line-height:14px;font-weight:400;color:#333;transform:scaleX(0.6598);transform-origin:0 50%;">IE1</div>
<div class="t" style="left:382.50px;top:378.80px;font-size:10.1px;line-height:14px;font-weight:400;color:#333;transform:scaleX(0.8970);transform-origin:0 50%;">5.5</div>
<div class="t" style="left:440.70px;top:378.80px;font-size:10.1px;line-height:14px;font-weight:400;color:#333;transform:scaleX(0.8900);transform-origin:0 50%;">4P</div>
<div class="t" style="left:536.70px;top:378.80px;font-size:10.1px;line-height:14px;font-weight:400;color:#333;transform:scaleX(0.7889);transform-origin:0 50%;">132S</div>
<div class="t" style="left:625.20px;top:378.80px;font-size:10.1px;line-height:14px;font-weight:400;color:#333;letter-spacing:0.342px;">Aluminyum</div>
<div class="t" style="left:746.20px;top:378.80px;font-size:10.1px;line-height:14px;font-weight:400;color:#333;transform:scaleX(0.8334);transform-origin:0 50%;">B3</div>
<div class="t" style="left:830.20px;top:378.80px;font-size:10.1px;line-height:14px;font-weight:400;color:#333;transform:scaleX(0.9916);transform-origin:0 50%;">Standart Yüz</div>
<div class="t" style="left:914.20px;top:378.80px;font-size:10.1px;line-height:14px;font-weight:400;color:#333;letter-spacing:0.143px;">Onaylandı</div>
<div class="t" style="left:1020.50px;top:378.80px;font-size:10.1px;line-height:14px;font-weight:400;color:#333;transform:scaleX(0.6635);transform-origin:0 50%;">S1</div>
<div class="t" style="left:1117.50px;top:378.80px;font-size:10.1px;line-height:14px;font-weight:400;color:#333;transform:scaleX(0.9557);transform-origin:0 50%;">-20°C...+40°C</div>
<div class="t" style="left:12.20px;top:403.80px;font-size:10.1px;line-height:14px;font-weight:400;color:#333;transform:scaleX(0.8519);transform-origin:0 50%;">V1EA132S4AB34</div>
<div class="t" style="left:126.20px;top:403.80px;font-size:10.1px;line-height:14px;font-weight:400;color:#333;transform:scaleX(0.8995);transform-origin:0 50%;">5,5kW 4P 132S B34</div>
<div class="t" style="left:236.20px;top:403.80px;font-size:10.1px;line-height:14px;font-weight:400;color:#333;transform:scaleX(0.9743);transform-origin:0 50%;">Trifaze</div>
<div class="t" style="left:291.90px;top:403.80px;font-size:10.1px;line-height:14px;font-weight:400;color:#333;transform:scaleX(0.6598);transform-origin:0 50%;">IE1</div>
<div class="t" style="left:382.50px;top:403.80px;font-size:10.1px;line-height:14px;font-weight:400;color:#333;transform:scaleX(0.8970);transform-origin:0 50%;">5.5</div>
<div class="t" style="left:440.70px;top:403.80px;font-size:10.1px;line-height:14px;font-weight:400;color:#333;transform:scaleX(0.8900);transform-origin:0 50%;">4P</div>
<div class="t" style="left:536.70px;top:403.80px;font-size:10.1px;line-height:14px;font-weight:400;color:#333;transform:scaleX(0.7889);transform-origin:0 50%;">132S</div>
<div class="t" style="left:625.20px;top:403.80px;font-size:10.1px;line-height:14px;font-weight:400;color:#333;letter-spacing:0.342px;">Aluminyum</div>
<div class="t" style="left:746.20px;top:403.80px;font-size:10.1px;line-height:14px;font-weight:400;color:#333;transform:scaleX(0.9183);transform-origin:0 50%;">B34</div>
<div class="t" style="left:830.20px;top:403.80px;font-size:10.1px;line-height:14px;font-weight:400;color:#333;transform:scaleX(0.9916);transform-origin:0 50%;">Standart Yüz</div>
<div class="t" style="left:914.20px;top:403.80px;font-size:10.1px;line-height:14px;font-weight:400;color:#333;letter-spacing:0.143px;">Onaylandı</div>
<div class="t" style="left:1020.50px;top:403.80px;font-size:10.1px;line-height:14px;font-weight:400;color:#333;transform:scaleX(0.6635);transform-origin:0 50%;">S1</div>
<div class="t" style="left:1117.50px;top:403.80px;font-size:10.1px;line-height:14px;font-weight:400;color:#333;transform:scaleX(0.9557);transform-origin:0 50%;">-20°C...+40°C</div>
<div class="t" style="left:12.20px;top:428.30px;font-size:10.1px;line-height:14px;font-weight:400;color:#333;transform:scaleX(0.8519);transform-origin:0 50%;">V1EA132S4AB35</div>
<div class="t" style="left:126.20px;top:428.30px;font-size:10.1px;line-height:14px;font-weight:400;color:#333;transform:scaleX(0.8973);transform-origin:0 50%;">5,5kW 4P 132S B35</div>
<div class="t" style="left:236.20px;top:428.30px;font-size:10.1px;line-height:14px;font-weight:400;color:#333;transform:scaleX(0.9743);transform-origin:0 50%;">Trifaze</div>
<div class="t" style="left:291.90px;top:428.30px;font-size:10.1px;line-height:14px;font-weight:400;color:#333;transform:scaleX(0.6598);transform-origin:0 50%;">IE1</div>
<div class="t" style="left:382.50px;top:428.30px;font-size:10.1px;line-height:14px;font-weight:400;color:#333;transform:scaleX(0.8970);transform-origin:0 50%;">5.5</div>
<div class="t" style="left:440.70px;top:428.30px;font-size:10.1px;line-height:14px;font-weight:400;color:#333;transform:scaleX(0.8900);transform-origin:0 50%;">4P</div>
<div class="t" style="left:536.70px;top:428.30px;font-size:10.1px;line-height:14px;font-weight:400;color:#333;transform:scaleX(0.7889);transform-origin:0 50%;">132S</div>
<div class="t" style="left:625.20px;top:428.30px;font-size:10.1px;line-height:14px;font-weight:400;color:#333;letter-spacing:0.342px;">Aluminyum</div>
<div class="t" style="left:746.20px;top:428.30px;font-size:10.1px;line-height:14px;font-weight:400;color:#333;transform:scaleX(0.9071);transform-origin:0 50%;">B35</div>
<div class="t" style="left:830.20px;top:428.30px;font-size:10.1px;line-height:14px;font-weight:400;color:#333;transform:scaleX(0.9916);transform-origin:0 50%;">Standart Yüz</div>
<div class="t" style="left:914.20px;top:428.30px;font-size:10.1px;line-height:14px;font-weight:400;color:#333;letter-spacing:0.143px;">Onaylandı</div>
<div class="t" style="left:1020.50px;top:428.30px;font-size:10.1px;line-height:14px;font-weight:400;color:#333;transform:scaleX(0.6635);transform-origin:0 50%;">S1</div>
<div class="t" style="left:1117.50px;top:428.30px;font-size:10.1px;line-height:14px;font-weight:400;color:#333;transform:scaleX(0.9557);transform-origin:0 50%;">-20°C...+40°C</div>
<div class="t" style="left:12.20px;top:452.80px;font-size:10.1px;line-height:14px;font-weight:400;color:#333;transform:scaleX(0.8424);transform-origin:0 50%;">V1EA132S4AB5</div>
<div class="t" style="left:126.20px;top:452.80px;font-size:10.1px;line-height:14px;font-weight:400;color:#333;transform:scaleX(0.8953);transform-origin:0 50%;">5,5kW 4P 132S B5</div>
<div class="t" style="left:236.20px;top:452.80px;font-size:10.1px;line-height:14px;font-weight:400;color:#333;transform:scaleX(0.9743);transform-origin:0 50%;">Trifaze</div>
<div class="t" style="left:291.90px;top:452.80px;font-size:10.1px;line-height:14px;font-weight:400;color:#333;transform:scaleX(0.6598);transform-origin:0 50%;">IE1</div>
<div class="t" style="left:382.50px;top:452.80px;font-size:10.1px;line-height:14px;font-weight:400;color:#333;transform:scaleX(0.8970);transform-origin:0 50%;">5.5</div>
<div class="t" style="left:440.70px;top:452.80px;font-size:10.1px;line-height:14px;font-weight:400;color:#333;transform:scaleX(0.8900);transform-origin:0 50%;">4P</div>
<div class="t" style="left:536.70px;top:452.80px;font-size:10.1px;line-height:14px;font-weight:400;color:#333;transform:scaleX(0.7889);transform-origin:0 50%;">132S</div>
<div class="t" style="left:625.20px;top:452.80px;font-size:10.1px;line-height:14px;font-weight:400;color:#333;letter-spacing:0.342px;">Aluminyum</div>
<div class="t" style="left:746.20px;top:452.80px;font-size:10.1px;line-height:14px;font-weight:400;color:#333;transform:scaleX(0.8576);transform-origin:0 50%;">B5</div>
<div class="t" style="left:830.20px;top:452.80px;font-size:10.1px;line-height:14px;font-weight:400;color:#333;transform:scaleX(0.9916);transform-origin:0 50%;">Standart Yüz</div>
<div class="t" style="left:914.20px;top:452.80px;font-size:10.1px;line-height:14px;font-weight:400;color:#333;letter-spacing:0.143px;">Onaylandı</div>
<div class="t" style="left:1020.50px;top:452.80px;font-size:10.1px;line-height:14px;font-weight:400;color:#333;transform:scaleX(0.6635);transform-origin:0 50%;">S1</div>
<div class="t" style="left:1117.50px;top:452.80px;font-size:10.1px;line-height:14px;font-weight:400;color:#333;transform:scaleX(0.9557);transform-origin:0 50%;">-20°C...+40°C</div>
</div>
<div class="abs" style="left:1445.400px;top:242px;width:12.400px;height:478.300px;background:#f1f1f1;"></div>
<div class="abs" style="left:1446.600px;top:255.500px;width:9.400px;height:433.600px;background:#c1c1c1;"></div>
<svg style="left:1448.300px;top:247.500px" width="6" height="4" viewBox="0 0 6 4"><path d="M0 4l3-4 3 4z" fill="#a3a3a3"/></svg>
<svg style="left:1448.300px;top:711.500px" width="6" height="4" viewBox="0 0 6 4"><path d="M0 0l3 4 3-4z" fill="#505050"/></svg>
<div class="abs" style="left:262px;top:720.300px;width:1183.500px;height:12.800px;background:#f1f1f1;"></div>
<div class="abs" style="left:274.500px;top:722px;width:732.500px;height:10px;background:#c1c1c1;"></div>
<svg style="left:266.500px;top:724.500px" width="3" height="6" viewBox="0 0 3 6"><path d="M3 0L0 3l3 3z" fill="#a3a3a3"/></svg>
<svg style="left:1437px;top:724.500px" width="3" height="6" viewBox="0 0 3 6"><path d="M0 0l3 3-3 3z" fill="#505050"/></svg>
<div class="abs" style="left:1445.400px;top:720.300px;width:12.400px;height:12.800px;background:#dcdcdc;"></div>
<div class="t" style="left:596.00px;top:741.70px;font-size:10.4px;line-height:15px;font-weight:400;color:#333;letter-spacing:0.062px;">2611 kayıttan 1 ile 17 arasını görüntülüyorsunuz</div>
<div class="abs" style="left:828px;top:737px;width:25px;height:25.500px;border-radius:3px;background:#fff;box-shadow:0 2px 1px -1px rgba(0,0,0,.2),0 1px 1px 0 rgba(0,0,0,.14),0 1px 3px 0 rgba(0,0,0,.12);"></div>
<svg style="left:837.700px;top:745px" width="5.600" height="10" viewBox="0 0 5 9" fill="none" stroke="#b5b5b5" stroke-width="1.300"><path d="M4.300 .7L.8 4.500l3.500 3.800"/></svg>
<div class="abs" style="left:863.3px;top:737px;width:26.600000000000023px;height:25.500px;border-radius:3px;background:#1f2d4d;box-shadow:0 2px 1px -1px rgba(0,0,0,.2),0 1px 1px 0 rgba(0,0,0,.14),0 1px 3px 0 rgba(0,0,0,.12);"></div><div class="t" style="left:873.65px;top:741.80px;font-size:10.6px;line-height:15px;font-weight:400;color:#fff;">1</div>
<div class="abs" style="left:896.6px;top:737px;width:25.0px;height:25.500px;border-radius:3px;background:#d3d3d3;box-shadow:0 2px 1px -1px rgba(0,0,0,.2),0 1px 1px 0 rgba(0,0,0,.14),0 1px 3px 0 rgba(0,0,0,.12);"></div><div class="t" style="left:906.15px;top:741.80px;font-size:10.6px;line-height:15px;font-weight:400;color:#3b4763;">2</div>
<div class="abs" style="left:928.3px;top:737px;width:25.5px;height:25.500px;border-radius:3px;background:#d3d3d3;box-shadow:0 2px 1px -1px rgba(0,0,0,.2),0 1px 1px 0 rgba(0,0,0,.14),0 1px 3px 0 rgba(0,0,0,.12);"></div><div class="t" style="left:938.10px;top:741.80px;font-size:10.6px;line-height:15px;font-weight:400;color:#3b4763;">3</div>
<div class="t" style="left:969.50px;top:749.10px;font-size:8px;line-height:11px;font-weight:700;color:#222;transform:scaleX(0.9742);transform-origin:0 50%;">...</div>
<div class="abs" style="left:990.2px;top:737px;width:26.5px;height:25.500px;border-radius:3px;background:#d3d3d3;box-shadow:0 2px 1px -1px rgba(0,0,0,.2),0 1px 1px 0 rgba(0,0,0,.14),0 1px 3px 0 rgba(0,0,0,.12);"></div><div class="t" style="left:995.45px;top:741.80px;font-size:10.6px;line-height:15px;font-weight:400;color:#3b4763;transform:scaleX(0.9046);transform-origin:0 50%;">152</div>
<div class="abs" style="left:1022.4px;top:737px;width:26.600000000000023px;height:25.500px;border-radius:3px;background:#d3d3d3;box-shadow:0 2px 1px -1px rgba(0,0,0,.2),0 1px 1px 0 rgba(0,0,0,.14),0 1px 3px 0 rgba(0,0,0,.12);"></div><div class="t" style="left:1027.70px;top:741.80px;font-size:10.6px;line-height:15px;font-weight:400;color:#3b4763;transform:scaleX(0.9046);transform-origin:0 50%;">153</div>
<div class="abs" style="left:1055.2px;top:737px;width:26.0px;height:25.500px;border-radius:3px;background:#d3d3d3;box-shadow:0 2px 1px -1px rgba(0,0,0,.2),0 1px 1px 0 rgba(0,0,0,.14),0 1px 3px 0 rgba(0,0,0,.12);"></div><div class="t" style="left:1060.20px;top:741.80px;font-size:10.6px;line-height:15px;font-weight:400;color:#3b4763;transform:scaleX(0.9046);transform-origin:0 50%;">154</div>
<div class="abs" style="left:1091.6px;top:737px;width:25.0px;height:25.500px;border-radius:3px;background:#fff;box-shadow:0 2px 1px -1px rgba(0,0,0,.2),0 1px 1px 0 rgba(0,0,0,.14),0 1px 3px 0 rgba(0,0,0,.12);"></div>
<svg style="left:1101.500px;top:745px" width="5.600" height="10" viewBox="0 0 5 9" fill="none" stroke="#555" stroke-width="1.150"><path d="M.7 .7l3.500 3.800L.7 8.300"/></svg>
</body></html>
